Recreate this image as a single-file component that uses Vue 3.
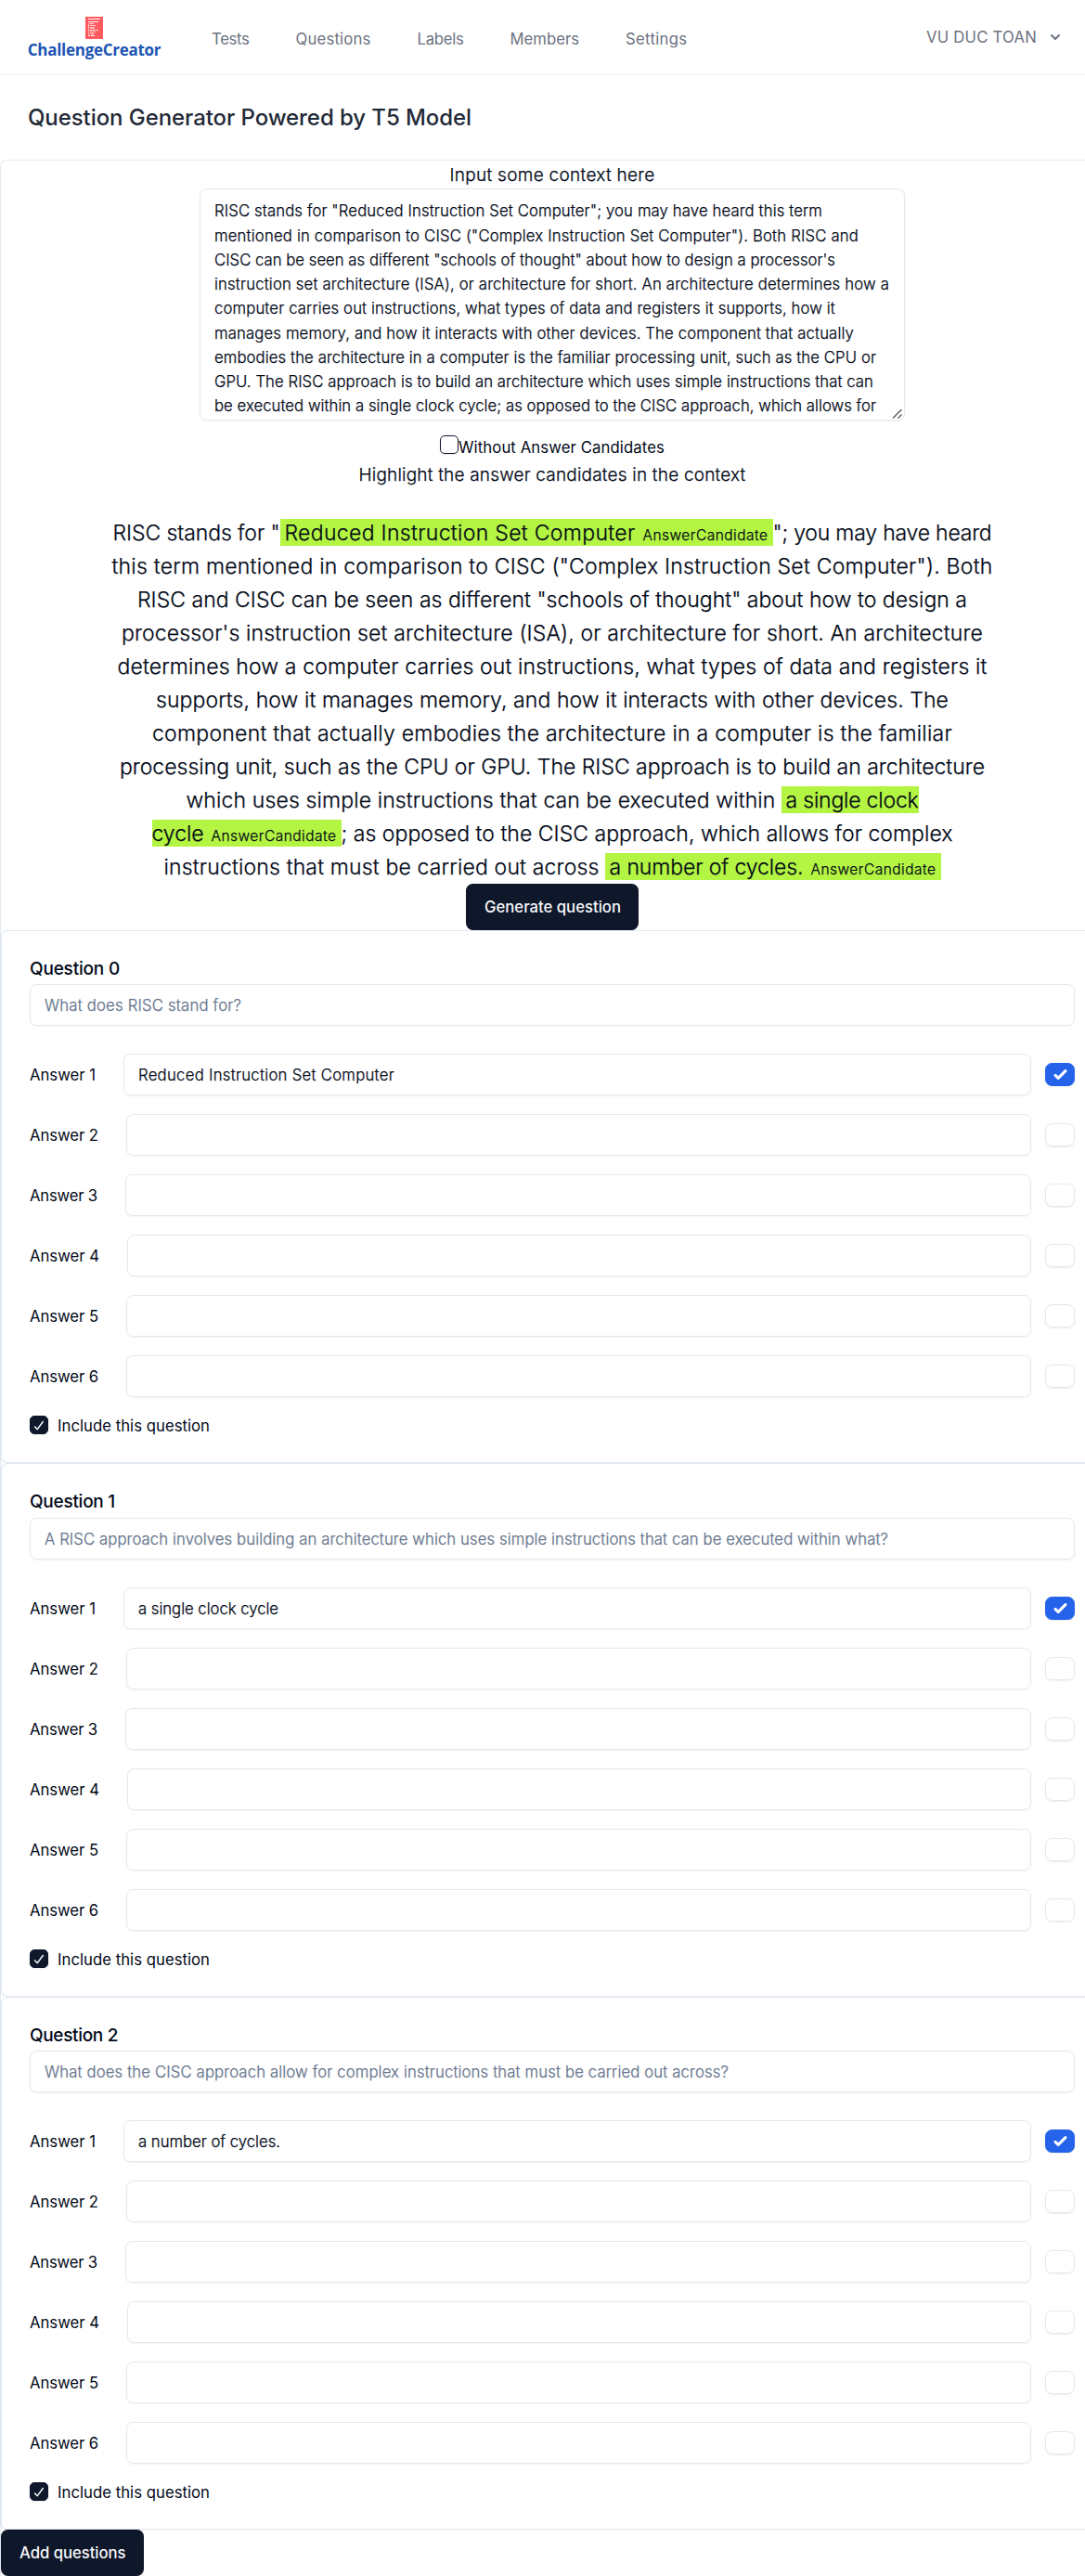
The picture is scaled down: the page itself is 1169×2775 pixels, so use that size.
<script setup>
// v-fit spreads the letters of a run of text so that it takes the given width
const vFit = {
  mounted(el, { value }) {
    const natural = el.getBoundingClientRect().width
    const count = el.textContent.length
    el.style.letterSpacing = `${((value - natural) / count).toFixed(4)}px`
  },
}

const nav = [
  { label: 'Tests', width: 40.5 },
  { label: 'Questions', width: 81 },
  { label: 'Labels', width: 50 },
  { label: 'Members', width: 74.5 },
  { label: 'Settings', width: 66.5 },
]

const contextLines = [
  ['RISC stands for "Reduced Instruction Set Computer"; you may have heard this term', 655],
  ['mentioned in comparison to CISC ("Complex Instruction Set Computer"). Both RISC and', 694],
  ['CISC can be seen as different "schools of thought" about how to design a processor\'s', 669],
  ['instruction set architecture (ISA), or architecture for short. An architecture determines how a', 727],
  ['computer carries out instructions, what types of data and registers it supports, how it', 669],
  ['manages memory, and how it interacts with other devices. The component that actually', 689],
  ['embodies the architecture in a computer is the familiar processing unit, such as the CPU or', 713],
  ['GPU. The RISC approach is to build an architecture which uses simple instructions that can', 710],
  ['be executed within a single clock cycle; as opposed to the CISC approach, which allows for', 713],
]

const editorLines = [
  [
    { text: 'RISC stands for "', width: 180 },
    { mark: true, open: true, close: true, text: 'Reduced Instruction Set Computer', width: 378 },
    { text: '"; you may have heard', width: 236 },
  ],
  [{ text: 'this term mentioned in comparison to CISC ("Complex Instruction Set Computer"). Both', width: 949 }],
  [{ text: 'RISC and CISC can be seen as different "schools of thought" about how to design a', width: 894 }],
  [{ text: 'processor\'s instruction set architecture (ISA), or architecture for short. An architecture', width: 928 }],
  [{ text: 'determines how a computer carries out instructions, what types of data and registers it', width: 937 }],
  [{ text: 'supports, how it manages memory, and how it interacts with other devices. The', width: 854 }],
  [{ text: 'component that actually embodies the architecture in a computer is the familiar', width: 862 }],
  [{ text: 'processing unit, such as the CPU or GPU. The RISC approach is to build an architecture', width: 932 }],
  [
    { text: 'which uses simple instructions that can be executed within', width: 635, gap: true },
    { mark: true, open: true, text: 'a single clock', width: 143 },
  ],
  [
    { mark: true, close: true, text: 'cycle', width: 56 },
    { text: '; as opposed to the CISC approach, which allows for complex', width: 659 },
  ],
  [
    { text: 'instructions that must be carried out across', width: 469, gap: true },
    { mark: true, open: true, close: true, text: 'a number of cycles.', width: 209 },
  ],
]

const labelWidths = [71, 74, 73, 75, 74, 74]

const questions = [
  { titleWidth: 97, text: 'What does RISC stand for?', width: 212, answer: 'Reduced Instruction Set Computer', answerWidth: 276 },
  {
    titleWidth: 92,
    text: 'A RISC approach involves building an architecture which uses simple instructions that can be executed within what?',
    width: 909,
    answer: 'a single clock cycle',
    answerWidth: 151,
  },
  {
    titleWidth: 95,
    text: 'What does the CISC approach allow for complex instructions that must be carried out across?',
    width: 737,
    answer: 'a number of cycles.',
    answerWidth: 153,
  },
]
</script>

<template>
  <div class="page">
    <nav class="topbar">
      <div class="brand">
        <svg class="brand-icon" width="19" height="24" viewBox="0 0 19 24">
          <rect width="19" height="24" fill="#ff5a5f" />
          <g fill="#fff">
            <rect x="3" y="2" width="13" height="1" />
            <rect x="3" y="5" width="11" height="1" opacity=".9" />
            <rect x="3" y="7" width="1" height="6" opacity=".7" />
            <rect x="5" y="7" width="4" height="1" opacity=".8" />
            <rect x="5" y="9" width="6" height="1" opacity=".7" />
            <rect x="5" y="11" width="5" height="2" opacity=".6" />
            <rect x="3" y="14" width="11" height="1" opacity=".8" />
            <rect x="3" y="16" width="1" height="1" />
            <rect x="5" y="16" width="6" height="1" opacity=".7" />
            <rect x="3" y="18" width="1" height="1" />
            <rect x="5" y="18" width="4" height="1" opacity=".9" />
            <rect x="3" y="20" width="2" height="1" />
            <rect x="6" y="20" width="4" height="1" />
          </g>
        </svg>
        <span v-fit="143.5" class="brand-name">ChallengeCreator</span>
      </div>
      <div class="links">
        <a v-for="item in nav" :key="item.label" class="link"><span v-fit="item.width">{{ item.label }}</span></a>
      </div>
      <button class="user">
        <span v-fit="119">VU DUC TOAN</span>
        <svg class="chevron" width="20" height="20" viewBox="0 0 20 20" fill="currentColor">
          <path fill-rule="evenodd" clip-rule="evenodd" d="M5.293 7.293a1 1 0 011.414 0L10 10.586l3.293-3.293a1 1 0 111.414 1.414l-4 4a1 1 0 01-1.414 0l-4-4a1 1 0 010-1.414z" />
        </svg>
      </button>
    </nav>

    <header class="heading"><h2><span v-fit="478">Question Generator Powered by T5 Model</span></h2></header>

    <main class="panel">
      <section class="generator">
        <div class="caption"><span v-fit="221">Input some context here</span></div>
        <div class="textarea">
          <div v-for="(line, i) in contextLines" :key="i" class="context-line"><span v-fit="line[1]">{{ line[0] }}</span></div>
          <svg class="grip" width="10" height="10" viewBox="0 0 10 10" stroke="#555" stroke-width="1.3">
            <path d="M0 9.5L9.5 0M5.5 9.5L9.5 5.5" />
          </svg>
        </div>
        <div class="without">
          <span class="box"></span>
          <span v-fit="222">Without Answer Candidates</span>
        </div>
        <div class="caption"><span v-fit="417">Highlight the answer candidates in the context</span></div>
        <div class="editor">
          <div v-for="(line, i) in editorLines" :key="i" class="editor-line">
            <template v-for="(part, j) in line" :key="j">
              <mark v-if="part.mark" :class="{ open: part.open, close: part.close }">
                <span v-fit="part.width">{{ part.text }}</span>
                <small v-if="part.close"><span v-fit="135">AnswerCandidate</span></small>
              </mark>
              <span v-else v-fit="part.width" :class="{ gap: part.gap }">{{ part.text }}</span>
            </template>
          </div>
        </div>
        <button class="primary generate"><span v-fit="147">Generate question</span></button>
      </section>

      <section v-for="(q, i) in questions" :key="i" class="card">
        <h3><span v-fit="q.titleWidth">Question {{ i }}</span></h3>
        <div class="field prompt"><span v-fit="q.width">{{ q.text }}</span></div>
        <div class="answers">
          <div v-for="(w, n) in labelWidths" :key="n" class="answer">
            <label><span v-fit="w">Answer {{ n + 1 }}</span></label>
            <div class="field"><span v-if="n === 0" v-fit="q.answerWidth">{{ q.answer }}</span></div>
            <span class="toggle" :class="{ on: n === 0 }">
              <svg v-if="n === 0" width="25" height="25" viewBox="0 0 16 16" fill="#fff">
                <path d="M12.207 4.793a1 1 0 010 1.414l-5 5a1 1 0 01-1.414 0l-2-2a1 1 0 011.414-1.414L6.5 9.086l4.293-4.293a1 1 0 011.414 0z" />
              </svg>
            </span>
          </div>
        </div>
        <div class="include">
          <span class="box checked">
            <svg width="20" height="20" viewBox="0 0 20 20" fill="none" stroke="#f8fafc" stroke-width="1.5" stroke-linecap="round" stroke-linejoin="round">
              <path d="M5.5 12L8.3 14.6L14.3 6.5" />
            </svg>
          </span>
          <span v-fit="164">Include this question</span>
        </div>
      </section>

      <button class="primary add"><span v-fit="114.5">Add questions</span></button>
    </main>
  </div>
</template>

<style>
body {
  margin: 0;
  overflow-x: hidden;
}
</style>

<style scoped>
.page {
  width: 1169px;
  height: 2775px;
  overflow: hidden;
  background: #fff;
  color: #020817;
  font-family: Inter, sans-serif;
  font-size: 16.7px;
  font-weight: 400;
}
.page *,
.page *::before {
  box-sizing: border-box;
}
span {
  white-space: nowrap;
}
.topbar {
  display: flex;
  height: 81px;
  padding-left: 30px;
  border-bottom: 1px solid #f0f1f3;
}
.brand {
  display: flex;
  flex-direction: column;
  align-items: center;
  width: 143px;
  padding-top: 18px;
}
.brand-icon {
  display: block;
  flex: none;
}
.brand-name {
  margin-top: 1px;
  color: #1d55b4;
  font: 700 17px/22px "Open Sans", sans-serif;
}
.links {
  display: flex;
  gap: 50px;
  margin: 30px 0 0 55px;
  line-height: 25px;
  color: #6b7280;
}
.user {
  display: flex;
  align-items: center;
  gap: 10px;
  height: 26px;
  margin: 27px 22px 0 auto;
  padding: 0;
  border: 0;
  background: none;
  color: #6b7280;
  font: inherit;
}
.heading {
  height: 91px;
  padding: 28px 30px 0;
}
.heading h2 {
  margin: 0;
  color: #1f2937;
  font-size: 24px;
  font-weight: 500;
  line-height: 36px;
}
.panel {
  width: 1189px;
  height: 2603px;
  border: 1px solid #e2e8f0;
  border-right: 0;
  border-bottom: 0;
  border-radius: 7px 0 0 0;
}
.generator {
  display: flex;
  flex-direction: column;
  align-items: center;
  height: 829px;
}
.caption,
.textarea,
.editor,
.field {
  font-weight: 300;
  -webkit-text-stroke: 0.25px currentColor;
}
.caption {
  height: 30px;
  font-size: 19px;
  line-height: 31px;
}
.textarea {
  position: relative;
  width: 760px;
  height: 250px;
  padding: 10.4px 15px 0;
  border: 1px solid #e2e8f0;
  border-radius: 7.5px;
  box-shadow: 0 1px 2px rgba(0, 0, 0, 0.05);
}
.context-line {
  height: 26.25px;
  line-height: 26.25px;
}
.grip {
  position: absolute;
  right: 2px;
  bottom: 1px;
}
.without {
  display: flex;
  align-items: flex-start;
  height: 43px;
  padding-top: 16px;
  line-height: 26px;
}
.box {
  flex: none;
  width: 20px;
  height: 20px;
  border: 1px solid #0f172a;
  border-radius: 5px;
  box-shadow: 0 1px 2px rgba(0, 0, 0, 0.08);
}
.editor {
  width: 100%;
  margin-top: 30px;
}
.editor-line {
  display: flex;
  justify-content: center;
  height: 36px;
  font-size: 23px;
  line-height: 36px;
}
mark {
  display: flex;
  height: 29px;
  margin-top: 3px;
  background: #b3f542;
  color: inherit;
  line-height: 30px;
}
.open {
  padding-left: 5px;
}
.close {
  padding-right: 5px;
}
small {
  margin-left: 8px;
  padding-top: 3px;
  font-size: 15.5px;
}
.gap {
  margin-right: 6px;
}
.primary {
  display: block;
  flex: none;
  height: 50px;
  padding: 0 20px;
  border: 0;
  border-radius: 7.5px;
  background: #0f172a;
  color: #f8fafc;
  font: 500 16.7px/51px Inter, sans-serif;
  text-align: left;
}
.generate {
  width: 186px;
}
.add {
  width: 154px;
}
.card {
  height: 574.3px;
  padding: 31px 32px 0 30px;
  border: 1px solid #e2e8f0;
  border-right: 0;
  border-radius: 7px 0 0 7px;
  box-shadow: 0 1px 2px rgba(0, 0, 0, 0.05);
}
h3 {
  height: 26.3px;
  margin: 0;
  font-size: 19px;
  font-weight: 500;
  line-height: 19.5px;
}
.field {
  flex: 1;
  height: 45px;
  padding: 0 15px;
  border: 1px solid #e2e8f0;
  border-radius: 7.5px;
  box-shadow: 0 1px 2px rgba(0, 0, 0, 0.05);
  line-height: 44px;
}
.prompt {
  width: 1126px;
  color: #64748b;
}
.answers {
  display: flex;
  flex-direction: column;
  gap: 20px;
  width: 1126px;
  margin-top: 30px;
}
.answer {
  display: flex;
  align-items: center;
}
label {
  margin-right: 30px;
  padding-top: 1px;
}
.toggle {
  display: flex;
  align-items: center;
  justify-content: center;
  width: 32px;
  height: 25px;
  margin-left: 15px;
  border: 1px solid #e2e8f0;
  border-radius: 7.5px;
  box-shadow: 0 1px 2px rgba(0, 0, 0, 0.07);
}
.toggle svg {
  flex: none;
}
.on {
  border-color: #2563eb;
  background: #2563eb;
}
.include {
  display: flex;
  gap: 10px;
  margin-top: 20px;
  line-height: 22px;
}
.checked {
  background: #0f172a;
}
.checked svg {
  display: block;
  margin: -1px;
}
</style>
